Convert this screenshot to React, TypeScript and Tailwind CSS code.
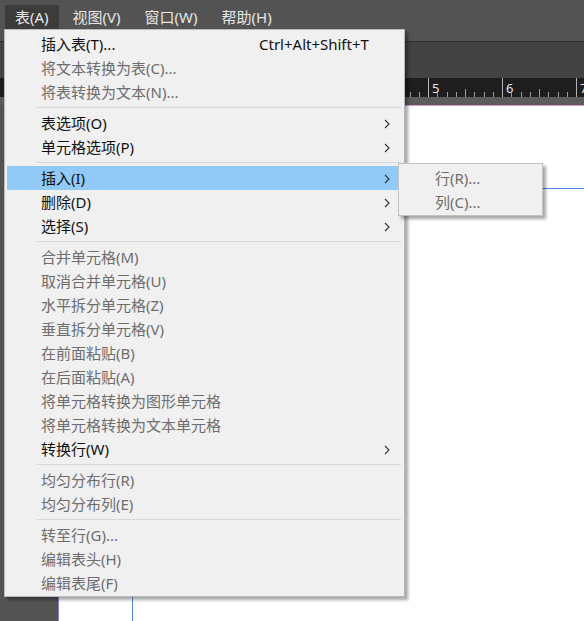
import React from 'react';

type Item =
  | { kind: 'sep' }
  | { kind: 'item'; label: string; enabled?: boolean; shortcut?: string; sub?: boolean; active?: boolean };

const items: Item[] = [
  { kind: 'item', label: '插入表(T)...', enabled: true, shortcut: 'Ctrl+Alt+Shift+T' },
  { kind: 'item', label: '将文本转换为表(C)...' },
  { kind: 'item', label: '将表转换为文本(N)...' },
  { kind: 'sep' },
  { kind: 'item', label: '表选项(O)', enabled: true, sub: true },
  { kind: 'item', label: '单元格选项(P)', enabled: true, sub: true },
  { kind: 'sep' },
  { kind: 'item', label: '插入(I)', enabled: true, sub: true, active: true },
  { kind: 'item', label: '删除(D)', enabled: true, sub: true },
  { kind: 'item', label: '选择(S)', enabled: true, sub: true },
  { kind: 'sep' },
  { kind: 'item', label: '合并单元格(M)' },
  { kind: 'item', label: '取消合并单元格(U)' },
  { kind: 'item', label: '水平拆分单元格(Z)' },
  { kind: 'item', label: '垂直拆分单元格(V)' },
  { kind: 'item', label: '在前面粘贴(B)' },
  { kind: 'item', label: '在后面粘贴(A)' },
  { kind: 'item', label: '将单元格转换为图形单元格' },
  { kind: 'item', label: '将单元格转换为文本单元格' },
  { kind: 'item', label: '转换行(W)', enabled: true, sub: true },
  { kind: 'sep' },
  { kind: 'item', label: '均匀分布行(R)' },
  { kind: 'item', label: '均匀分布列(E)' },
  { kind: 'sep' },
  { kind: 'item', label: '转至行(G)...' },
  { kind: 'item', label: '编辑表头(H)' },
  { kind: 'item', label: '编辑表尾(F)' },
];

const menus = ['表(A)', '视图(V)', '窗口(W)', '帮助(H)'];

const Chevron = () => (
  <svg width="6" height="10" viewBox="0 0 6 10" className="absolute right-[8px] top-[8px]">
    <path d="M1 1 L5 5 L1 9" fill="none" stroke="#333" strokeWidth="1.1" />
  </svg>
);

// only the part right of the menu is visible, labels start at 5
const Ruler = () => {
  const unit = 74;
  const origin = 58;
  const ticks: React.ReactNode[] = [];
  for (let n = 0; n <= 7; n++) {
    const x = origin + n * unit;
    ticks.push(<line key={`M${n}`} x1={x + 0.5} y1={0} x2={x + 0.5} y2={19} stroke="#b4b4b4" />);
    if (n >= 5)
      ticks.push(
        <text key={`T${n}`} x={x + 4} y={15} fill="#e4e4e4" fontSize="13" fontFamily="'Noto Sans', sans-serif">
          {n}
        </text>
      );
    for (let s = 1; s < 8; s++) {
      const sx = Math.round(x + (s * unit) / 8) + 0.5;
      ticks.push(<line key={`m${n}-${s}`} x1={sx} y1={s === 4 ? 11 : 14} x2={sx} y2={19} stroke="#9a9a9a" />);
    }
  }
  return (
    <svg width="584" height="19" className="block">
      {ticks}
    </svg>
  );
};

export default function App() {
  return (
    <div
      className="relative w-[584px] h-[621px] overflow-hidden bg-white text-[15px]"
      style={{ fontFamily: "'Noto Sans', 'Noto Sans CJK SC', sans-serif" }}
    >
      {/* app chrome */}
      <div className="h-[41px] bg-[#535353]">
        <div className="flex pl-[5px] pt-[5px]">
          {menus.map((m, i) => (
            <div
              key={m}
              className={`h-[24px] leading-[24px] px-[10px] mr-[4px] text-[#e6e6e6] ${i === 0 ? 'bg-[#3c3c3c]' : ''}`}
            >
              {m}
            </div>
          ))}
        </div>
      </div>
      <div className="h-[1px] bg-[#2f2f2f]" />
      <div className="h-[36px] bg-[#434343]" />
      <div className="h-[19px] bg-[#1e1e1e]">
        <Ruler />
      </div>
      <div className="h-[8px] bg-[#5c5c5c]" />
      <div className="flex h-[516px]">
        <div className="w-[59px] bg-[#535353] border-r border-[#8d7dc6]" />
        <div className="relative flex-1 bg-white border-t border-[#cf9bcf]">
          <div className="absolute left-[73px] top-0 bottom-0 w-[1px] bg-[#4f86e0]" />
          <div className="absolute left-[73px] right-0 top-[82px] h-[1px] bg-[#4f86e0]" />
        </div>
      </div>

      {/* main menu */}
      <div className="absolute left-[4px] top-[29px] w-[401px] bg-[#f0f0f0] border border-[#b9b9b9] pt-[2px] pb-[1px] shadow-[3px_3px_3px_rgba(0,0,0,0.35)]">
        {items.map((it, i) =>
          it.kind === 'sep' ? (
            <div key={i} className="h-[7px] flex items-center ml-[32px] mr-[3px]">
              <div className="h-[1px] w-full bg-[#d7d7d7]" />
            </div>
          ) : (
            <div
              key={i}
              className={`relative flex h-[24px] leading-[24px] ml-[2px] mr-[6px] pl-[34px] whitespace-nowrap ${
                it.active ? 'bg-[#91c9f7]' : ''
              } ${it.enabled ? 'text-[#111111]' : 'text-[#6d6d6d]'}`}
            >
              <span className="w-[218px]">{it.label}</span>
              {it.shortcut && <span>{it.shortcut}</span>}
              {it.sub && <Chevron />}
            </div>
          )
        )}
      </div>

      {/* submenu */}
      <div className="absolute left-[398px] top-[163px] w-[145px] bg-[#f0f0f0] border border-[#c2c2c2] pt-[2px] pb-[1px] shadow-[3px_3px_3px_rgba(0,0,0,0.35)]">
        {['行(R)...', '列(C)...'].map((l) => (
          <div key={l} className="h-[24px] leading-[24px] ml-[2px] mr-[2px] pl-[34px] text-[#6d6d6d] whitespace-nowrap">
            {l}
          </div>
        ))}
      </div>
    </div>
  );
}
